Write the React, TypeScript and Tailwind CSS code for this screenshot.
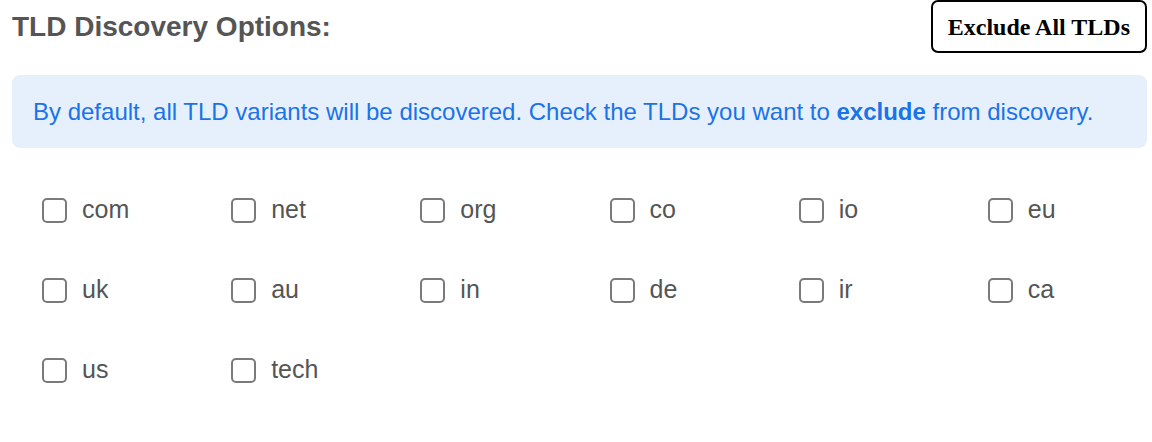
import React from "react";

const tlds = ["com","net","org","co","io","eu","uk","au","in","de","ir","ca","us","tech"];

export default function App() {
  return (
    <div className="w-[1152px] h-[442px] bg-white pl-[12px] pr-[5px]">
      <div className="flex items-center justify-between h-[53px]">
        <h2 className="text-[28px] leading-none font-bold text-[#555555] font-['Liberation_Sans',Arial,sans-serif]">
          TLD Discovery Options:
        </h2>
        <button className="h-[53px] px-[15px] border-2 border-black rounded-[7px] bg-white text-black font-bold text-[24px] leading-none font-['Liberation_Serif','Times_New_Roman',serif]">
          Exclude All TLDs
        </button>
      </div>
      <div className="mt-[22px] h-[73px] rounded-[8px] bg-[#e6f0fd] pl-[21px] flex items-center text-[#1a73e8] text-[24px] font-['Liberation_Sans',Arial,sans-serif]">
        <p>
          By default, all TLD variants will be discovered. Check the TLDs you want to <b className="font-bold">exclude</b> from discovery.
        </p>
      </div>
      <div className="mt-[22px] grid grid-cols-6">
        {tlds.map((t) => (
          <label key={t} className="h-[80px] flex items-center pl-[30px] gap-[15px] cursor-pointer">
            <input
              type="checkbox"
              className="appearance-none w-[25px] h-[25px] border-2 border-[#7a7a7a] rounded-[5px] bg-white shrink-0"
            />
            <span className="text-[25px] text-[#555555] font-['Liberation_Sans',Arial,sans-serif]">{t}</span>
          </label>
        ))}
      </div>
    </div>
  );
}
